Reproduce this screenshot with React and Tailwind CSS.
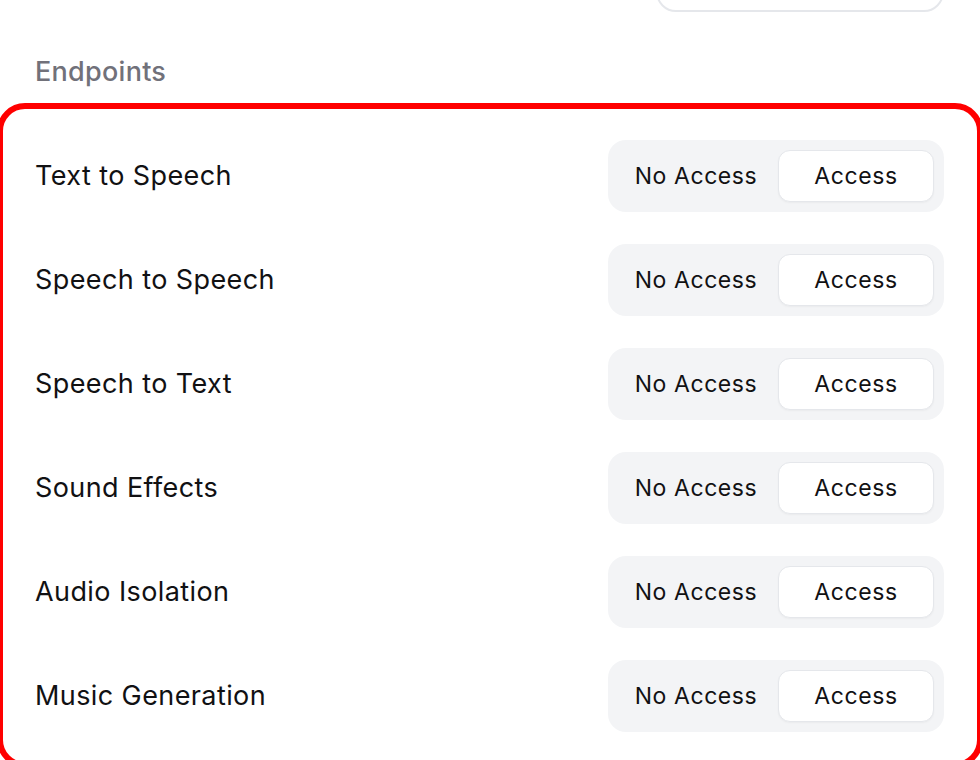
import { useState } from 'react';

const endpoints = [
  'Text to Speech',
  'Speech to Speech',
  'Speech to Text',
  'Sound Effects',
  'Audio Isolation',
  'Music Generation',
];

function AccessToggle() {
  const [value, setValue] = useState('access');

  return (
    <div className="flex w-[336px] h-[72px] items-center gap-[4px] rounded-[18px] bg-[#f3f4f6] p-[10px]">
      <button
        onClick={() => setValue('none')}
        className={
          value === 'none'
            ? 'h-[52px] w-[156px] rounded-[12px] border border-[#e5e7eb] bg-white text-[23px] tracking-[0.025em] text-[#111113]'
            : 'h-[52px] w-[156px] rounded-[12px] text-[23px] tracking-[0.025em] text-[#111113]'
        }
      >
        No Access
      </button>
      <button
        onClick={() => setValue('access')}
        className={
          value === 'access'
            ? 'h-[52px] w-[156px] rounded-[12px] border border-[#e5e7eb] bg-white text-[23px] tracking-[0.025em] text-[#111113] shadow-[0_1px_2px_rgba(0,0,0,0.04)]'
            : 'h-[52px] w-[156px] rounded-[12px] text-[23px] tracking-[0.025em] text-[#111113]'
        }
      >
        Access
      </button>
    </div>
  );
}

export default function App() {
  return (
    <div className="relative h-[760px] w-[980px] overflow-hidden bg-white font-['Inter',sans-serif]">
      {/* tail of the field above */}
      <div className="ml-[656px] -mt-[50px] h-[62px] w-[288px] rounded-[20px] border-2 border-[#e5e7eb] bg-white" />

      <h2 className="mt-[44px] pl-[35px] text-[27px] font-medium leading-[32px] tracking-[0.01em] text-[#71717a]">
        Endpoints
      </h2>

      <div className="-mx-[3px] mt-[15px] rounded-[28px] border-[6px] border-[#ff0000] pt-[31px] pb-[30px] pl-[32px] pr-[33px]">
        <div className="flex flex-col gap-[32px]">
          {endpoints.map((name) => (
            <div key={name} className="flex items-center justify-between">
              <span className="text-[27px] tracking-[0.015em] text-[#111113]">{name}</span>
              <AccessToggle />
            </div>
          ))}
        </div>
      </div>
    </div>
  );
}
